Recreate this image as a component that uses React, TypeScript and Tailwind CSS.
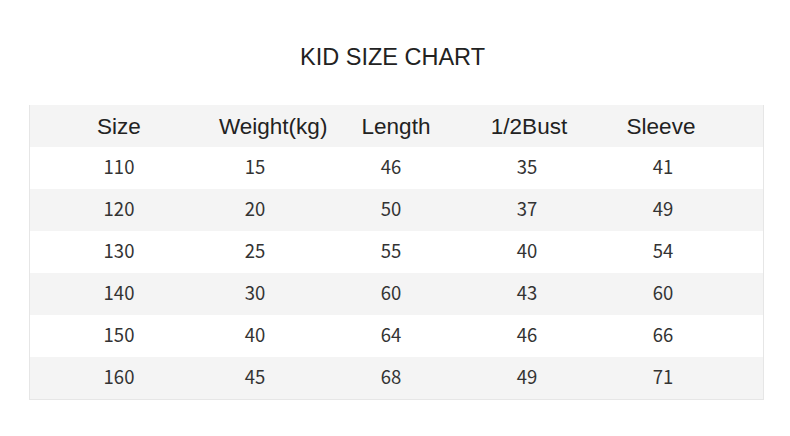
const rows = [
  ["110", "15", "46", "35", "41"],
  ["120", "20", "50", "37", "49"],
  ["130", "25", "55", "40", "54"],
  ["140", "30", "60", "43", "60"],
  ["150", "40", "64", "46", "66"],
  ["160", "45", "68", "49", "71"],
];

const headers = [
  { label: "Size", cls: "" },
  { label: "Weight(kg)", cls: "pl-[32px]" },
  { label: "Length", cls: "pl-[10px]" },
  { label: "1/2Bust", cls: "pl-[4px]" },
  { label: "Sleeve", cls: "pr-[4px]" },
];

const App = () => {
  return (
    <div className="w-[790px] h-[436px] bg-white overflow-hidden">
      <h1 className="pt-[43px] pr-[5px] text-center text-[23.5px] leading-[28px] text-[#222] font-['Liberation_Sans',Arial,sans-serif]">
        KID SIZE CHART
      </h1>
      <div className="ml-[29px] mt-[34px] w-[735px] border-x border-b border-[#e6e6e6]">
        <div className="flex h-[42px] items-center bg-[#f4f4f4] pl-[21px] pt-[2px] text-[22.5px] text-[#222] font-['Liberation_Sans',Arial,sans-serif]">
          {headers.map((h) => (
            <div key={h.label} className={`w-[136px] text-center ${h.cls}`}>
              {h.label}
            </div>
          ))}
        </div>
        {rows.map((r, i) => (
          <div
            key={r[0]}
            className={`flex h-[42px] items-center pl-[21px] pb-[2px] text-[18.5px] text-[#333] font-['Noto_Sans_CJK_SC','Noto_Sans',sans-serif] ${
              i % 2 === 1 ? "bg-[#f4f4f4]" : "bg-white"
            }`}
          >
            {r.map((v, j) => (
              <div key={j} className="w-[136px] text-center">
                {v}
              </div>
            ))}
          </div>
        ))}
      </div>
    </div>
  );
};

export default App;
